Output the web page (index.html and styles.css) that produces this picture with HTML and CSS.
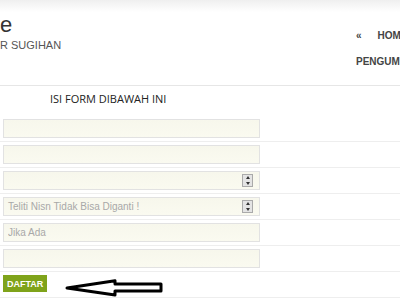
FILE: index.html
```html
<!DOCTYPE html>
<html lang="en">

<head>
    <meta charset="UTF-8">
    <meta name="viewport" content="width=device-width, initial-scale=1.0">
    <title>Pendaftaran</title>
    <link rel="stylesheet" href="styles.css">
</head>

<body>

    <div class="topbar"></div>

    <div id="header">
        <div class="brand">
            <div class="brand-title">e</div>
            <div class="brand-sub">R SUGIHAN</div>
        </div>
        <div class="nav">
            <div class="nav-row"><span class="nav-arrow">&laquo;</span><span class="nav-link">HOME</span></div>
            <div class="nav-row"><span class="nav-link">PENGUMUMAN</span></div>
        </div>
    </div>

    <div id="form-container">
        <h3 class="form-title">ISI FORM DIBAWAH INI</h3>

        <div class="form-row"><input class="field" type="text"></div>
        <div class="form-row"><input class="field" type="text"></div>
        <div class="form-row">
            <div class="field select-field">
                <span class="spinner"><span class="up"></span><span class="down"></span></span>
            </div>
        </div>
        <div class="form-row">
            <div class="field select-field">
                <span class="placeholder">Teliti Nisn Tidak Bisa Diganti !</span>
                <span class="spinner"><span class="up"></span><span class="down"></span></span>
            </div>
        </div>
        <div class="form-row"><input class="field" type="text" placeholder="Jika Ada"></div>
        <div class="form-row"><input class="field" type="text"></div>

        <div class="form-row button-row">
            <button class="btn-daftar">DAFTAR</button>
            <svg class="pointer" width="104" height="20" viewBox="0 0 104 20">
                <polygon points="2,9 50,1.8 50,5 96,5 96,12 50,12 50,16" fill="#fff" stroke="#000" stroke-width="3" stroke-linejoin="round"/>
            </svg>
        </div>
    </div>

</body>

</html>
```

FILE: styles.css
```css
body {
    margin: 0;
    font-family: 'Liberation Sans', Arial, sans-serif;
    background-color: #fff;
    overflow: hidden;
}

.topbar {
    height: 12px;
    background: linear-gradient(#efefef, #fff);
}

#header {
    display: flex;
    justify-content: space-between;
    height: 73px;
    border-bottom: 1px solid #e6e6e6;
}

.brand-title {
    font-size: 22px;
    line-height: 25px;
    color: #333;
}

.brand-sub {
    margin-top: 2px;
    font-size: 11px;
    color: #555;
}

.nav {
    width: 44px;
    padding-top: 13px;
    white-space: nowrap;
}

.nav-row {
    height: 26px;
}

.nav-arrow {
    font-size: 10px;
    font-weight: bold;
    color: #444;
    margin-right: 16px;
}

.nav-link {
    font-size: 10px;
    font-weight: bold;
    color: #444;
}

.form-title {
    margin: 0;
    padding: 5px 0 0 50px;
    height: 25px;
    font-family: 'Open Sans', sans-serif;
    font-weight: normal;
    font-size: 11px;
    color: #222;
}

.form-row {
    height: 22px;
    padding: 3px 0 0 3px;
    border-bottom: 1px solid #eee;
}

.field {
    box-sizing: border-box;
    display: block;
    width: 257px;
    height: 19px;
    margin: 0;
    padding: 0 4px;
    border: 1px solid #e2e2e2;
    background: linear-gradient(#f7f7ec, #fafaf0);
    font-family: 'Liberation Sans', Arial, sans-serif;
    font-size: 10px;
    color: #999;
}

.field::placeholder {
    color: #a8a8a8;
}

.select-field {
    display: flex;
    align-items: center;
    justify-content: space-between;
}

.placeholder {
    color: #a8a8a8;
}

.spinner {
    margin-left: auto;
    margin-right: 2px;
    width: 9px;
    height: 11px;
    border: 1px solid #aaa;
    background: #e4e4e4;
    display: flex;
    flex-direction: column;
    align-items: center;
    justify-content: space-around;
}

.up {
    width: 0;
    height: 0;
    border-left: 2px solid transparent;
    border-right: 2px solid transparent;
    border-bottom: 3px solid #333;
}

.down {
    width: 0;
    height: 0;
    border-left: 2px solid transparent;
    border-right: 2px solid transparent;
    border-top: 3px solid #333;
}

.button-row {
    display: flex;
    align-items: flex-start;
}

.btn-daftar {
    height: 17px;
    padding: 0 4px;
    border: none;
    background-color: #7fa31a;
    color: #fff;
    font-family: 'Liberation Sans', Arial, sans-serif;
    font-size: 9px;
    font-weight: bold;
}

.pointer {
    margin: 4px 0 0 18px;
}
```
